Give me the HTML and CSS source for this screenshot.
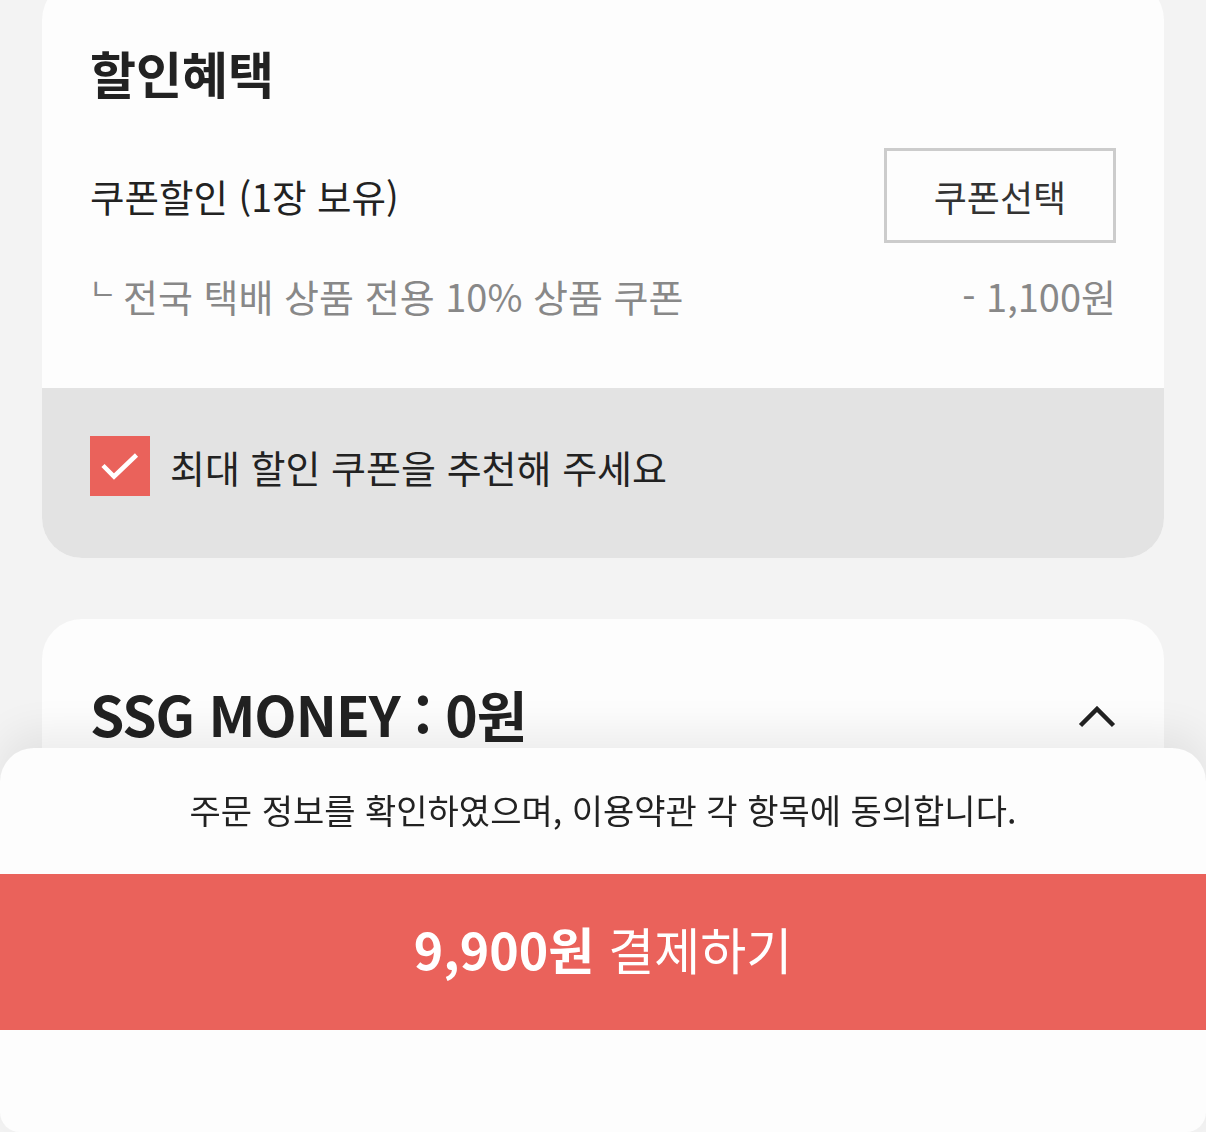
FILE: index.html
```html
<!DOCTYPE html>
<html lang="ko">
<head>
	<meta charset="UTF-8">
	<title>주문/결제</title>
	<link rel="stylesheet" href="styles.css">
</head>
<body>

	<div class="page">
		<!-- 할인혜택 -->
		<section class="card benefit">
			<div class="benefit-body">
				<h2 class="card-title">할인혜택</h2>
				<div class="coupon-row">
					<span class="coupon-label">쿠폰할인 (1장 보유)</span>
					<button class="coupon-btn" type="button">쿠폰선택</button>
				</div>
				<div class="coupon-detail">
					<span><span class="corner">ㄴ</span>전국 택배 상품 전용 10% 상품 쿠폰</span>
					<span>- 1,100원</span>
				</div>
			</div>
			<label class="recommend">
				<span class="check">
					<svg width="60" height="60" viewBox="0 0 60 60">
						<path d="M13 29.5 L24 40.5 L46.5 19" fill="none" stroke="#fff" stroke-width="4.5"/>
					</svg>
				</span>
				최대 할인 쿠폰을 추천해 주세요
			</label>
		</section>

		<!-- SSG MONEY -->
		<section class="card money">
			<h2 class="money-title">SSG MONEY : 0원</h2>
			<svg class="chevron" width="38" height="22" viewBox="0 0 38 22">
				<path d="M2.5 19.5 L19 3 L35.5 19.5" fill="none" stroke="#222" stroke-width="4.5"/>
			</svg>
		</section>
	</div>

	<!-- 하단 결제 영역 -->
	<div class="sheet">
		<p class="agree">주문 정보를 확인하였으며, 이용약관 각 항목에 동의합니다.</p>
		<button class="pay-btn" type="button"><b>9,900원</b> 결제하기</button>
	</div>

</body>
</html>
```

FILE: styles.css
```css
*{
	margin: 0;
	padding: 0;
	box-sizing: border-box;
}
body{
	background-color: #f3f3f3;
	font-family: "Noto Sans CJK KR", "Noto Sans", sans-serif;
	color: #222;
	height: 1132px;
	overflow: hidden;
}

.page{
	padding: 0 42px;
	margin-top: -20px;
}

/*카드 공통*/
.card{
	background-color: #fdfdfd;
	border-radius: 40px;
	overflow: hidden;
}

/*할인혜택*/
.benefit-body{
	padding: 57px 48px 67px;
}
.card-title{
	font-size: 50px;
	font-weight: 700;
	line-height: 70px;
}
.coupon-row{
	display: flex;
	justify-content: space-between;
	align-items: center;
	margin-top: 41px;
}
.coupon-label{
	font-size: 37.5px;
	line-height: 50px;
}
.coupon-btn{
	width: 232px;
	height: 95px;
	border: 3px solid #cccccc;
	background-color: #fdfdfd;
	font-family: inherit;
	font-size: 36px;
	color: #333;
}
.coupon-detail{
	display: flex;
	justify-content: space-between;
	height: 50px;
	margin-top: 28px;
	font-size: 38px;
	line-height: 50px;
	color: #888;
}
.corner{
	display: inline-block;
	width: 34px;
	margin-left: -1px;
	font-size: 30px;
	line-height: 30px;
	vertical-align: 12px;
}

/*최대 할인 추천*/
.recommend{
	display: flex;
	align-items: center;
	gap: 20px;
	padding: 48px 48px 62px;
	background-color: #e3e3e3;
	font-size: 38px;
}
.check{
	display: block;
	width: 60px;
	height: 60px;
	background-color: #ea625b;
}
.check svg{
	display: block;
}

/*SSG MONEY*/
.money{
	margin-top: 61px;
	height: 400px;
	padding: 59px 48px;
	display: flex;
	justify-content: space-between;
	align-items: flex-start;
}
.money-title{
	font-size: 55px;
	font-weight: 700;
	line-height: 70px;
	letter-spacing: -1px;
}
.chevron{
	margin-top: 28px;
}

/*하단 시트*/
.sheet{
	position: fixed;
	left: 0;
	right: 0;
	bottom: 0;
	height: 384px;
	background-color: #fdfdfd;
	border-radius: 34px 34px 20px 20px;
	box-shadow: 0 -16px 40px rgba(0,0,0,.07);
}
.agree{
	text-align: center;
	font-size: 34px;
	line-height: 40px;
	padding-top: 42px;
}
.pay-btn{
	display: block;
	width: 100%;
	height: 156px;
	margin-top: 44px;
	padding-bottom: 8px;
	border: none;
	background-color: #ea625b;
	color: #fff;
	font-family: inherit;
	font-size: 50px;
}
.pay-btn b{
	font-weight: 700;
}
```
